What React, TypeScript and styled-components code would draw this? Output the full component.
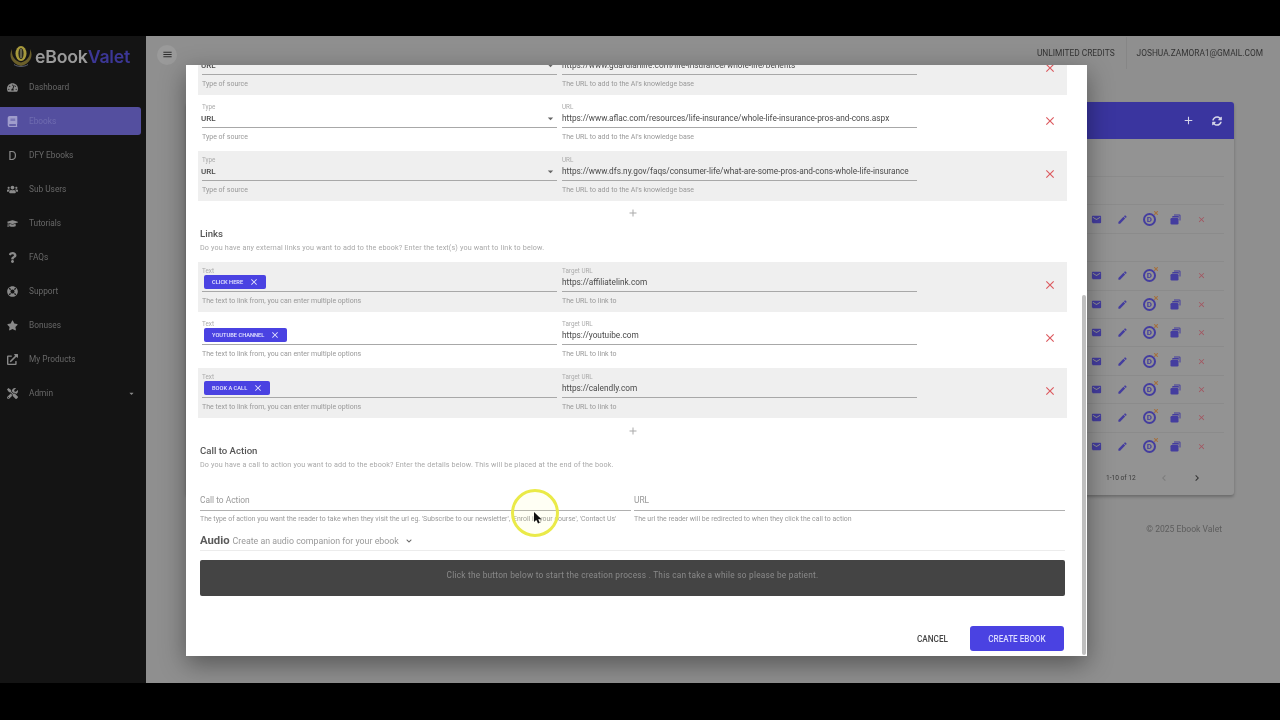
import React from "react";
import styled, { createGlobalStyle } from "styled-components";
import {
  FaBook,
  FaCaretDown,
  FaExternalLinkAlt,
  FaGraduationCap,
  FaLifeRing,
  FaQuestion,
  FaStar,
  FaSyncAlt,
  FaTachometerAlt,
  FaTimes,
  FaTools,
  FaUsers,
  FaChevronDown,
} from "react-icons/fa";
import { MdAdd, MdClose, MdEdit, MdEmail, MdChevronLeft, MdChevronRight, MdMenu, MdArrowDropDown } from "react-icons/md";

const GlobalStyle = createGlobalStyle`
  * { box-sizing: border-box; }
  html, body { margin: 0; height: 100%; overflow: hidden; background: #000; }
  body { font-family: Roboto, "Liberation Sans", sans-serif; }
`;

const Frame = styled.div`
  position: relative;
  width: 1280px;
  height: 720px;
  padding: 36px 0 37px;
  background: #000;
  filter: blur(0.35px);
`;

const Shell = styled.div`
  display: flex;
  height: 100%;
`;

const Sidebar = styled.aside`
  width: 146px;
  flex: none;
  background: #141414;
`;

const Logo = styled.div`
  height: 37px;
  padding: 3px 0 0 8px;
  display: flex;
  align-items: center;
  gap: 1px;
  font-family: Inter, sans-serif;
  font-size: 17.7px;
  font-weight: 600;
  letter-spacing: -0.2px;
  color: #9b9b9b;
  span {
    color: #3c3796;
  }
`;

const Nav = styled.nav`
  display: flex;
  flex-direction: column;
`;

const NavItem = styled.div<{ $active?: boolean }>`
  height: 28px;
  margin: 0 5px 6px 0;
  padding-left: 6px;
  display: flex;
  align-items: center;
  border-radius: 0 3px 3px 0;
  font-size: 8.3px;
  color: ${(p) => (p.$active ? "#6f6cb0" : "#686868")};
  background: ${(p) => (p.$active ? "#544f9f" : "transparent")};
`;

const NavIcon = styled.span<{ $active?: boolean }>`
  width: 13px;
  margin-right: 10px;
  display: flex;
  justify-content: center;
  font-size: 11px;
  color: ${(p) => (p.$active ? "#a09dcc" : "#8a8a8a")};
`;

const NavLetter = styled.span`
  font-size: 13px;
  line-height: 11px;
`;

const NavCaret = styled.span`
  margin-left: auto;
  margin-right: 6px;
  display: flex;
  font-size: 7px;
  color: #8a8a8a;
`;

const Main = styled.main`
  flex: 1;
  display: flex;
  flex-direction: column;
  background: #8f8f8f;
`;

const TopBar = styled.header`
  height: 37px;
  display: flex;
  align-items: center;
  padding: 0 17px 0 11px;
  font-size: 8.35px;
  color: #333;
`;

const MenuButton = styled.div`
  width: 20px;
  height: 20px;
  border-radius: 50%;
  display: flex;
  align-items: center;
  justify-content: center;
  background: #9a9a9a;
  font-size: 11px;
  color: #2c2c2c;
`;

const TopInfo = styled.div`
  margin-left: auto;
  display: flex;
  align-items: center;
  height: 100%;
  padding-bottom: 4px;
`;

const Credits = styled.span`
  padding: 0 11px 0 0;
`;

const Account = styled.span`
  padding-left: 10px;
  border-left: 1px solid #868686;
  line-height: 32px;
`;

const Content = styled.div`
  flex: 1;
  padding: 29px 46px 0 40px;
`;

const Card = styled.section`
  height: 393px;
  background: #939393;
  border-radius: 3px;
  box-shadow: 0 2px 3px rgba(0, 0, 0, 0.25);
`;

const CardHead = styled.div`
  height: 37px;
  display: flex;
  align-items: center;
  justify-content: flex-end;
  gap: 17px;
  padding-right: 12px;
  border-radius: 3px 3px 0 0;
  background: #3a359f;
  color: #d5d5e8;
`;

const HeadIcon = styled.span<{ $size: number }>`
  display: flex;
  font-size: ${(p) => p.$size}px;
`;

const Table = styled.div`
  padding: 37px 10px 0;
`;

const TableRow = styled.div`
  height: 28.4px;
  display: flex;
  align-items: center;
  justify-content: flex-end;
  padding-right: 9px;
  border-top: 1px solid #8b8b8b;
`;

const Action = styled.span<{ $danger?: boolean }>`
  position: relative;
  width: 26.3px;
  display: flex;
  justify-content: center;
  font-size: ${(p) => (p.$danger ? 9 : 11)}px;
  color: ${(p) => (p.$danger ? "#a4545f" : "#443d9f")};
`;

const DfyBadge = styled.span`
  width: 13px;
  height: 13px;
  border: 2px solid #443d9f;
  border-radius: 50%;
  display: flex;
  align-items: center;
  justify-content: center;
  font-size: 8px;
  font-weight: 700;
`;

const DfyMark = styled.span`
  position: absolute;
  top: -3px;
  right: 3px;
  display: flex;
  font-size: 6px;
  color: #a5703f;
`;

const Pager = styled.div`
  height: 37px;
  display: flex;
  align-items: center;
  padding-left: 920px;
  font-size: 6.6px;
  color: #3a3a3a;
`;

const PagerLabel = styled.span`
  width: 52px;
`;

const PagerArrow = styled.span<{ $off?: boolean }>`
  width: 33px;
  display: flex;
  font-size: 12px;
  color: ${(p) => (p.$off ? "#7c7c7c" : "#333")};
`;

const Copyright = styled.footer`
  margin-top: 29px;
  padding-right: 12px;
  text-align: right;
  font-size: 8.6px;
  color: #5d5d5d;
`;

const Modal = styled.div`
  position: absolute;
  top: 65px;
  left: 186px;
  width: 901px;
  height: 591px;
  display: flex;
  flex-direction: column;
  overflow: hidden;
  background: #fff;
  box-shadow: 0 8px 24px rgba(0, 0, 0, 0.4);
`;

const ModalBody = styled.div`
  flex: 1;
  overflow: hidden;
  padding: 0 20px 0 12px;
`;

const Rows = styled.div<{ $scrolled?: boolean }>`
  margin-top: ${(p) => (p.$scrolled ? "-20px" : "0")};
`;

const Row = styled.div<{ $shaded: boolean }>`
  height: 50px;
  margin-bottom: 3px;
  padding: 6px 0 0 4px;
  display: grid;
  grid-template-columns: 355px 355px 1fr;
  column-gap: 5px;
  background: ${(p) => (p.$shaded ? "#efefef" : "#fff")};
`;

const Field = styled.div`
  display: flex;
  flex-direction: column;
`;

const FieldLabel = styled.label`
  height: 7px;
  font-size: 6.3px;
  line-height: 6px;
  color: #aaa;
`;

const Control = styled.div<{ $thick?: boolean }>`
  height: 17px;
  padding-bottom: 2px;
  display: flex;
  align-items: center;
  justify-content: space-between;
  border-bottom: ${(p) => (p.$thick ? 1.5 : 1)}px solid #a8a8a8;
  font-size: 8.27px;
  white-space: nowrap;
  color: #4a4a4a;
`;

const SelectValue = styled.span`
  margin-left: -1px;
  font-weight: 500;
  font-size: 8px;
`;

const SelectCaret = styled.span`
  display: flex;
  font-size: 13px;
  color: #666;
`;

const Helper = styled.div`
  margin-top: 5px;
  font-size: 7px;
  line-height: 9px;
  color: #999;
`;

const RemoveButton = styled.span`
  justify-self: end;
  align-self: center;
  margin: -11px 10px 0 0;
  display: flex;
  font-size: 14px;
  color: #dc5a5f;
`;

const Chip = styled.span`
  height: 14px;
  margin-left: 2px;
  padding: 0 7px 0 8px;
  display: inline-flex;
  align-items: center;
  gap: 6px;
  border-radius: 2px;
  background: #4a42e2;
  color: #e8e8ff;
  font-size: 5.7px;
  font-weight: 500;
  text-transform: uppercase;
  svg {
    font-size: 10px;
  }
`;

const AddRow = styled.div<{ $top: number }>`
  display: flex;
  justify-content: center;
  padding-top: ${(p) => p.$top}px;
  height: 19px;
  font-size: 12px;
  color: #aaa;
`;

const Section = styled.div`
  padding: 0 2px;
`;

const SectionTitle = styled.h3<{ $gap: number }>`
  margin: ${(p) => p.$gap}px 0 0;
  font-size: 9.6px;
  line-height: 12px;
  font-weight: 500;
  color: #555;
`;

const SectionText = styled.p`
  margin: 3px 0 10px;
  font-size: 7.2px;
  line-height: 9px;
  letter-spacing: 0.15px;
  color: #a8a8a8;
`;

const CtaGrid = styled.div`
  margin-top: 25px;
  display: grid;
  grid-template-columns: 431px 431px;
  column-gap: 3px;
`;

const CtaControl = styled.div`
  height: 17px;
  padding-bottom: 4px;
  display: flex;
  align-items: center;
  border-bottom: 1px solid #b0b0b0;
  font-size: 8.4px;
  color: #999;
`;

const CtaHelper = styled.div`
  margin-top: 4px;
  font-size: 6.95px;
  line-height: 9px;
  color: #999;
  white-space: nowrap;
`;

const AudioRow = styled.div`
  margin-top: 9px;
  height: 18px;
  display: flex;
  align-items: center;
  gap: 3px;
  padding-bottom: 2px;
  border-bottom: 1px solid #ececec;
  font-size: 8.8px;
  color: #999;
  strong {
    font-size: 11.3px;
    font-weight: 700;
    color: #5a5a5a;
  }
  svg {
    margin-left: 4px;
    font-size: 6px;
    color: #666;
  }
`;

const Notice = styled.div`
  margin-top: 9px;
  height: 36px;
  padding-bottom: 7px;
  display: flex;
  align-items: center;
  justify-content: center;
  border-radius: 2px;
  background: #444;
  font-size: 8.3px;
  letter-spacing: 0.23px;
  color: #8a8a8a;
`;

const Actions = styled.div`
  height: 60px;
  padding: 30px 23px 0 0;
  display: flex;
  justify-content: flex-end;
  align-items: flex-start;
`;

const CancelButton = styled.button`
  height: 25px;
  margin-right: 22px;
  padding: 0;
  border: 0;
  background: none;
  font: 500 8.2px Roboto, sans-serif;
  color: #444;
`;

const CreateButton = styled.button`
  width: 94px;
  height: 25px;
  border: 0;
  border-radius: 3px;
  background: #4a42e2;
  font: 500 8.15px Roboto, sans-serif;
  color: #dcdcff;
`;

const ScrollThumb = styled.div`
  position: absolute;
  top: 230px;
  right: 1px;
  bottom: 1px;
  width: 4px;
  border-radius: 2px;
  background: #bfbfbf;
`;

const ClickRing = styled.div`
  position: absolute;
  left: 511px;
  top: 489px;
  width: 48px;
  height: 48px;
  border-radius: 50%;
  border: 3px solid #eaea48;
  background: rgba(255, 255, 120, 0.08);
`;

const Pointer = styled.svg`
  position: absolute;
  left: 534px;
  top: 512px;
`;

const navItems = [
  { label: "Dashboard", icon: <FaTachometerAlt /> },
  { label: "Ebooks", icon: <FaBook />, active: true },
  { label: "DFY Ebooks", icon: <NavLetter>D</NavLetter> },
  { label: "Sub Users", icon: <FaUsers /> },
  { label: "Tutorials", icon: <FaGraduationCap /> },
  { label: "FAQs", icon: <FaQuestion /> },
  { label: "Support", icon: <FaLifeRing /> },
  { label: "Bonuses", icon: <FaStar /> },
  { label: "My Products", icon: <FaExternalLinkAlt /> },
  { label: "Admin", icon: <FaTools />, caret: true },
];

const sources = [
  "https://www.guardianlife.com/life-insurance/whole-life/benefits",
  "https://www.aflac.com/resources/life-insurance/whole-life-insurance-pros-and-cons.aspx",
  "https://www.dfs.ny.gov/faqs/consumer-life/what-are-some-pros-and-cons-whole-life-insurance",
];

const links = [
  { text: "Click here", url: "https://affiliatelink.com" },
  { text: "Youtube channel", url: "https://youtuibe.com" },
  { text: "Book a call", url: "https://calendly.com" },
];

const tableRows = [true, false, true, true, true, true, true, true, true];

const LogoMark = () => (
  <svg width="26" height="26" viewBox="0 0 26 26" fill="none">
    <path d="M4 6C0 13 4 21 13 23C22 21 26 13 22 6C23 13 19 18 13 19.5C7 18 3 13 4 6Z" fill="#6b5f2a" />
    <path d="M6 21.5C9 24 17 24 20 21.5" stroke="#5b6070" strokeWidth="1" />
    <ellipse cx="13" cy="10.5" rx="5.5" ry="7.5" fill="#a89a3c" />
    <ellipse cx="13" cy="10.5" rx="2.6" ry="5.5" fill="#2a2a20" />
    <path d="M13 6V15" stroke="#8f8a6a" strokeWidth="1.2" />
  </svg>
);

const StackIcon = () => (
  <svg width="11" height="11" viewBox="0 0 11 11" fill="currentColor">
    <path d="M4 0.5H9.5A1 1 0 0 1 10.5 1.5V6.5H9.5V1.5H4Z" />
    <path d="M2.5 2H8A1 1 0 0 1 9 3V3.4H2Z" />
    <rect x="0.5" y="4" width="8" height="6.5" rx="1.2" />
  </svg>
);

const App: React.FC = () => {
  return (
    <Frame>
      <GlobalStyle />
      <Shell>
        <Sidebar>
          <Logo>
            <LogoMark />
            <div>
              eBook<span>Valet</span>
            </div>
          </Logo>
          <Nav>
            {navItems.map((item) => (
              <NavItem key={item.label} $active={item.active}>
                <NavIcon $active={item.active}>{item.icon}</NavIcon>
                {item.label}
                {item.caret && (
                  <NavCaret>
                    <FaCaretDown />
                  </NavCaret>
                )}
              </NavItem>
            ))}
          </Nav>
        </Sidebar>
        <Main>
          <TopBar>
            <MenuButton>
              <MdMenu />
            </MenuButton>
            <TopInfo>
              <Credits>UNLIMITED CREDITS</Credits>
              <Account>JOSHUA.ZAMORA1@GMAIL.COM</Account>
            </TopInfo>
          </TopBar>
          <Content>
            <Card>
              <CardHead>
                <HeadIcon $size={13}>
                  <MdAdd />
                </HeadIcon>
                <HeadIcon $size={10}>
                  <FaSyncAlt />
                </HeadIcon>
              </CardHead>
              <Table>
                <TableRow />
                {tableRows.map((hasActions, i) => (
                  <TableRow key={i}>
                    {hasActions && (
                      <>
                        <Action>
                          <MdEmail />
                        </Action>
                        <Action>
                          <MdEdit />
                        </Action>
                        <Action>
                          <DfyBadge>D</DfyBadge>
                          <DfyMark>
                            <FaTimes />
                          </DfyMark>
                        </Action>
                        <Action>
                          <StackIcon />
                        </Action>
                        <Action $danger>
                          <MdClose />
                        </Action>
                      </>
                    )}
                  </TableRow>
                ))}
              </Table>
              <Pager>
                <PagerLabel>1-10 of 12</PagerLabel>
                <PagerArrow $off>
                  <MdChevronLeft />
                </PagerArrow>
                <PagerArrow>
                  <MdChevronRight />
                </PagerArrow>
              </Pager>
            </Card>
            <Copyright>© 2025 Ebook Valet</Copyright>
          </Content>
        </Main>
      </Shell>

      <Modal>
        <ModalBody>
          <Rows $scrolled>
            {sources.map((url, i) => (
              <Row key={url} $shaded={i !== 1}>
                <Field>
                  <FieldLabel>Type</FieldLabel>
                  <Control>
                    <SelectValue>URL</SelectValue>
                    <SelectCaret>
                      <MdArrowDropDown />
                    </SelectCaret>
                  </Control>
                  <Helper>Type of source</Helper>
                </Field>
                <Field>
                  <FieldLabel>URL</FieldLabel>
                  <Control>{url}</Control>
                  <Helper>The URL to add to the AI's knowledge base</Helper>
                </Field>
                <RemoveButton>
                  <MdClose />
                </RemoveButton>
              </Row>
            ))}
          </Rows>
          <AddRow $top={3}>
            <MdAdd />
          </AddRow>
          <Section>
            <SectionTitle $gap={5}>Links</SectionTitle>
            <SectionText>
              Do you have any external links you want to add to the ebook? Enter the text(s) you want to link to below.
            </SectionText>
          </Section>
          <Rows>
            {links.map((link, i) => (
              <Row key={link.url} $shaded={i !== 1}>
                <Field>
                  <FieldLabel>Text</FieldLabel>
                  <Control $thick>
                    <Chip>
                      {link.text}
                      <MdClose />
                    </Chip>
                  </Control>
                  <Helper>The text to link from, you can enter multiple options</Helper>
                </Field>
                <Field>
                  <FieldLabel>Target URL</FieldLabel>
                  <Control>{link.url}</Control>
                  <Helper>The URL to link to</Helper>
                </Field>
                <RemoveButton>
                  <MdClose />
                </RemoveButton>
              </Row>
            ))}
          </Rows>
          <AddRow $top={4}>
            <MdAdd />
          </AddRow>
          <Section>
            <SectionTitle $gap={5}>Call to Action</SectionTitle>
            <SectionText>
              Do you have a call to action you want to add to the ebook? Enter the details below. This will be placed at the end of the book.
            </SectionText>
            <CtaGrid>
              <div>
                <CtaControl>Call to Action</CtaControl>
                <CtaHelper>
                  The type of action you want the reader to take when they visit the url eg. 'Subscribe to our newsletter', 'Enroll in your course', 'Contact Us'
                </CtaHelper>
              </div>
              <div>
                <CtaControl>URL</CtaControl>
                <CtaHelper>The url the reader will be redirected to when they click the call to action</CtaHelper>
              </div>
            </CtaGrid>
            <AudioRow>
              <strong>Audio</strong> Create an audio companion for your ebook
              <FaChevronDown />
            </AudioRow>
            <Notice>Click the button below to start the creation process . This can take a while so please be patient.</Notice>
          </Section>
        </ModalBody>
        <Actions>
          <CancelButton>CANCEL</CancelButton>
          <CreateButton>CREATE EBOOK</CreateButton>
        </Actions>
        <ScrollThumb />
      </Modal>

      <ClickRing />
      <Pointer width="8" height="12" viewBox="0 0 8 12">
        <path d="M0 0V10L2.4 7.8L4 11.5L5.8 10.7L4.2 7.2H7.4Z" fill="#111" />
      </Pointer>
    </Frame>
  );
};

export default App;
